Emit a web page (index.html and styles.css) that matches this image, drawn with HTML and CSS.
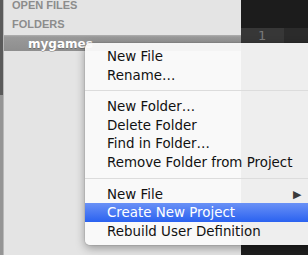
FILE: index.html
```html
<!DOCTYPE html>
<html lang="en">
<head>
    <meta charset="UTF-8">
    <title>Sidebar Menu</title>
    <link rel="stylesheet" href="styles.css">
</head>
<body>

    <div class="window">
        <div class="edge"></div>

        <div class="sidebar">
            <div class="section-title first">OPEN FILES</div>
            <div class="section-title">FOLDERS</div>
            <div class="folder selected">mygames</div>
        </div>

        <div class="editor">
            <div class="tabs"></div>
            <div class="line current">
                <span class="gutter">1</span>
                <span class="code"></span>
            </div>
        </div>

        <!-- context menu opened on the folder -->
        <ul class="menu">
            <li class="item">New File</li>
            <li class="item">Rename…</li>
            <li class="sep"></li>
            <li class="item">New Folder…</li>
            <li class="item">Delete Folder</li>
            <li class="item">Find in Folder…</li>
            <li class="item">Remove Folder from Project</li>
            <li class="sep"></li>
            <li class="item submenu">New File <span class="arrow">▶</span></li>
            <li class="item active">Create New Project</li>
            <li class="item">Rebuild User Definition</li>
        </ul>
    </div>

</body>
</html>
```

FILE: styles.css
```css
body {
    margin: 0;
    padding: 0;
    font-family: 'DejaVu Sans', 'Liberation Sans', sans-serif;
    overflow: hidden;
}

.window {
    position: relative;
    display: flex;
    width: 308px;
    height: 255px;
    overflow: hidden;
}

.edge {
    width: 3px;
    background: linear-gradient(to bottom, #5a5a5a 0, #5a5a5a 95px, #959595 95px);
    border-right: 1px solid #b8b8b8;
}

.sidebar {
    width: 237px;
    background: #e4e4e4;
}

.section-title {
    height: 19px;
    line-height: 19px;
    padding-left: 8px;
    font-family: 'Liberation Sans', Arial, sans-serif;
    font-size: 11px;
    font-weight: bold;
    color: #8c8c8c;
}

.section-title.first {
    margin-top: -4px;
}

.folder {
    height: 16px;
    line-height: 19px;
    margin-top: 1px;
    padding-left: 24px;
    font-size: 12px;
    font-weight: bold;
    color: #fff;
}

.folder.selected {
    background: linear-gradient(to bottom, #b0b0b0 0, #999 2px, #8e8e8e 100%);
    text-shadow: 0 1px 0 rgba(0, 0, 0, 0.25);
}

.editor {
    flex: 1;
    background: #1e1e1e;
}

.tabs {
    height: 28px;
    background: #1c1c1c;
}

.line {
    display: flex;
    height: 15px;
}

.gutter {
    width: 43px;
    background: #373737;
    color: #7a7a7a;
    font-size: 13px;
    line-height: 15px;
    padding-left: 17px;
    box-sizing: border-box;
}

.code {
    flex: 1;
    background: #2b2b2b;
}

.menu {
    position: absolute;
    left: 85px;
    top: 43px;
    width: 240px;
    margin: 0;
    padding: 4px 0 5px;
    list-style: none;
    background: rgba(250, 250, 250, 0.95);
    border-radius: 5px;
    box-shadow: 0 3px 10px rgba(0, 0, 0, 0.35), 0 0 0 1px rgba(0, 0, 0, 0.06);
}

.item {
    position: relative;
    height: 18.6px;
    line-height: 19px;
    padding-left: 22px;
    font-size: 13.4px;
    color: #111;
}

.item.active {
    background: linear-gradient(to bottom, #6a91f6, #2a62f0);
    color: #fff;
}

.arrow {
    position: absolute;
    left: 208px;
    top: 0;
    font-size: 11px;
    color: #3a3a3a;
}

.sep {
    height: 1px;
    margin: 6px 0 6px;
    background: #dcdcdc;
}
```
